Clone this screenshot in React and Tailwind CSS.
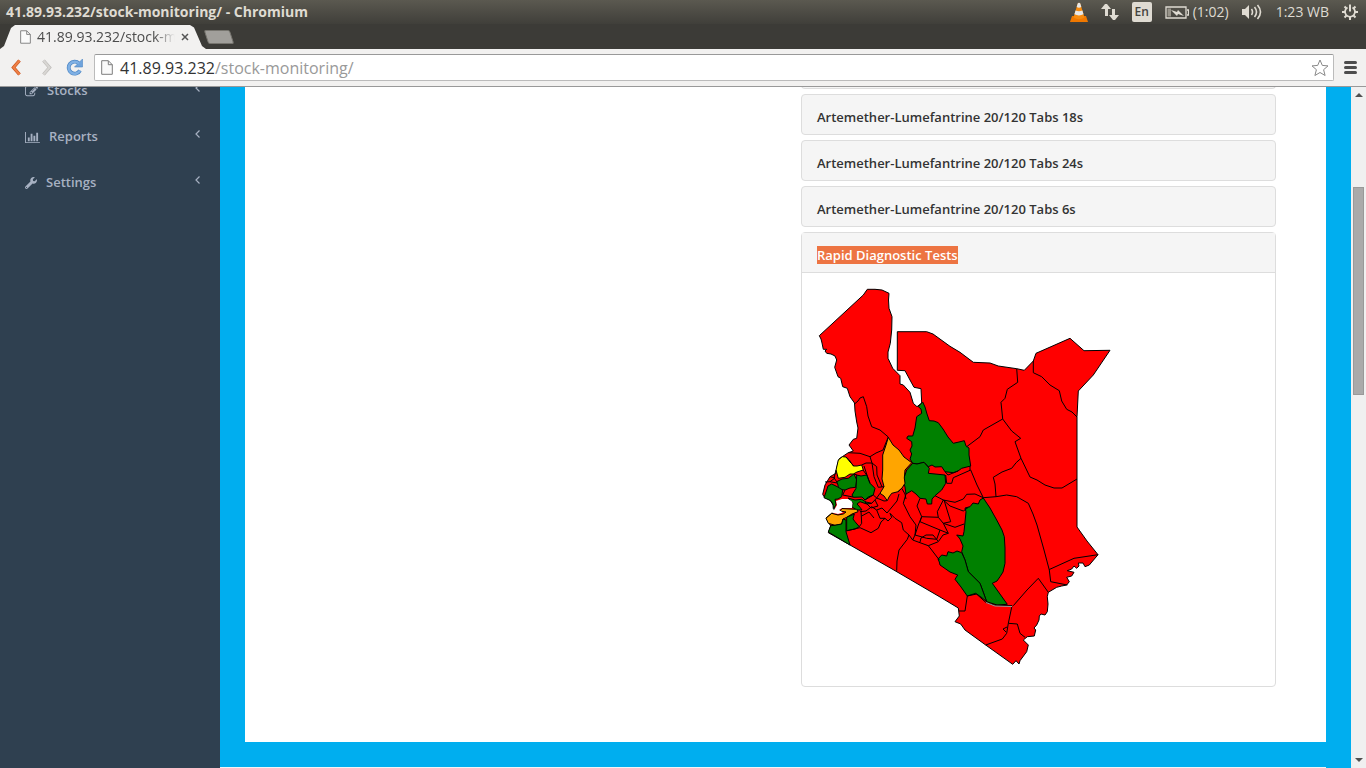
import React from 'react';
import { FaWrench } from 'react-icons/fa';

const StocksIcon = () => (
  <svg viewBox="0 0 1792 1792" className="w-[13px] h-[13px] fill-current" aria-hidden="true">
    <path d="M888 1184l116-116-152-152-116 116v56h96v96h56zm440-720q-16-16-33 1l-350 350q-17 17-1 33t33-1l350-350q17-17 1-33zm80 594v190q0 119-84.5 203.5t-203.5 84.5h-832q-119 0-203.5-84.5t-84.5-203.5v-832q0-119 84.5-203.5t203.5-84.5h832q63 0 117 25 15 7 18 23 3 17-9 29l-49 49q-14 14-32 8-23-6-45-6h-832q-66 0-113 47t-47 113v832q0 66 47 113t113 47h832q66 0 113-47t47-113v-126q0-13 9-22l64-64q15-15 35-7t20 29zm-96-738l288 288-672 672h-288v-288zm444 132l-92 92-288-288 92-92q28-28 68-28t68 28l152 152q28 28 28 68t-28 68z" />
  </svg>
);

const ReportsIcon = () => (
  <svg viewBox="0 0 2048 1792" className="w-[15px] h-[13px] fill-current" aria-hidden="true">
    <path d="M640 896v512h-256v-512h256zm384-512v1024h-256v-1024h256zm1024 1152v128h-2048v-1536h128v1408h1920zm-640-896v768h-256v-768h256zm384-384v1152h-256v-1152h256z" />
  </svg>
);

const PageIcon = ({ className }) => (
  <svg viewBox="0 0 12 15" className={className} aria-hidden="true">
    <path d="M.7.7h6.6l4 4v9.6H.7z" fill="#fafafa" stroke="#7d7d7d" />
    <path d="M7.3.7v4h4" fill="none" stroke="#7d7d7d" />
  </svg>
);

const menuItems = [
  { label: 'Stocks', icon: <StocksIcon /> },
  { label: 'Reports', icon: <ReportsIcon /> },
  { label: 'Settings', icon: <FaWrench className="w-3 h-3" /> },
];

const drugs = [
  'Artemether-Lumefantrine 20/120 Tabs 18s',
  'Artemether-Lumefantrine 20/120 Tabs 24s',
  'Artemether-Lumefantrine 20/120 Tabs 6s',
];

// Counties with a stock status other than red
const counties = [
  { name: 'Samburu', fill: 'green', points: '922.7,402 925,407 927,414 929.3,420.7 934,421 938.3,422.7 943,429 948,437 953.3,443.3 959,442 964.3,440.7 966,446 969,448 969,455 970.7,466 961.7,468.3 958,471 953.3,472.7 945,471.7 941.7,466.7 935,467 932,465 928.3,466.7 924,462.3 917,464 912.7,463.3 910,459 911.7,454 910,450 912,446 911.7,441.7 906.7,438.3 908,436 912.7,436 915,428 916.7,416.7 921.7,413.3 921,409 918.3,406.7' },
  { name: 'Laikipia', fill: 'green', points: '912.7,463.3 917,464 924,462.3 929.3,468.3 928.3,473.3 945,475 945.7,483.3 941.7,490 935,495.7 932,499 931.7,504 927.3,504 926,499 920,498.3 916,494 911.7,490.7 906,494 905,487 903.3,480 906.7,470' },
  { name: 'Baringo', fill: 'orange', points: '888.3,437.3 893,445 899,450 904,457 911.7,462.7 905,470 904.3,478 905,483.3 902,488 898,491.7 891.7,493.3 889,497 887.3,500.7 884,496 880,493.3 884,486.7 882,479 882.7,470 882.7,455 886,445' },
  { name: 'Bungoma', fill: 'yellow', points: '842.3,456.7 846,457 849.3,460 853.3,466 857,466 861.7,465 863.3,470 857,472 853.3,474 850,474 845,477.3 838.3,478.3 836,470 838.3,460' },
  { name: 'Kakamega', fill: 'green', points: '836.7,481.7 842,479 848.3,478.3 854,474 856.7,480 855.7,487.3 850,488 845,490 838.3,489.3 838,485' },
  { name: 'Nandi', fill: 'green', points: '856.7,475 861,476 866.7,475 870,483.3 875,488.3 873.3,495 865,500 862,497 853.3,497.3 852,495 856,488.3' },
  { name: 'Siaya', fill: 'green', points: '826.7,490 828,486 831.7,484 837.3,486.7 842.7,490 841.7,496.7 838,499 835,499.3 836,505 833.3,508.7 833,504 830.7,500.7 824,497.7' },
  { name: 'Kisumu', fill: 'green', points: '848,498 855,500 861.7,499.3 866,502 871.7,503.3 866.7,504 860,501.7 857,504 860,507.3 862,510 856.7,510 852,507 853,503' },
  { name: 'Homa Bay', fill: 'orange', points: '826,518.3 831.7,513.3 838,515 843.3,514 846,512 840,511 842,508.5 850,509 856.7,509.3 858,511.7 852,514 846.7,517.3 843,519 841.7,524 835,525.3 828.3,523.3' },
  { name: 'Migori', fill: 'green', points: '835,525.3 841.7,524 843,519 846,520 846,531.7 850,545 828.3,532 830.7,525.7' },
  { name: 'Kisii', fill: 'green', points: '846.7,517.3 854.3,514 853,519 855,521.7 859.3,526.7 855,529 846.7,530.7' },
  { name: 'Kitui', fill: 'green', points: '983.3,498 990,508 996.7,520 1002,530 1004.3,536.7 1005,548 1005,563.3 1003,572 1000,576.7 997,581 992.3,583.3 1007.3,604.3 997,605 986.7,601.7 980,583.3 968.3,571.7 965,560 961.7,551.7 963,546 960,539 956.7,535 963,536 964,531.7 965,522 966,511.7 965,508 970,506.7 973,503 978.3,504 980,500' },
  { name: 'Makueni', fill: 'green', points: '939.3,562 938,559 941.7,555 946.7,556 948,551.7 953,553 957,551 961.7,552.7 965,560 968.3,571.7 980,583.3 986.7,601.7 981,597 976.7,594 967.3,596 961,587 955,579.3 957.7,575 950,572 940,565' },
];

const mainland =
  'M855 411L854.5 403 850 396.7 847.3 388.3 842.7 386.7 840.7 378.3 838 376.7 834.7 367.3 836.7 360 835 356 831 354 826.7 353.3 825 351 826.7 349.3 823.3 349.3 822 343 821 339 819.3 335.7 863.3 295 867.3 289.3 875 289.3 882 290 889 293.3 888.5 300 889 308.3 892 316.7 891.7 330 890.3 343.3 888 352 888 358.3 892.7 368.3 900 375.7 900 384 903.3 385 910 392.3 913.3 403.3 917 406.7 921.7 403 921 388.7 914 387.3 910 380 905 370.7 897.3 370.3V331.7H926.7L933 334 950 346.3 960 352.3 973.3 362.3 990 363 998.3 366 1016.7 368.7 1024.3 370.3 1033.3 361 1036 353.3 1070 338.3 1084 350.7 1110 350.3 1093.3 375 1078.3 391 1077 416.7V527L1087 541 1098 554.7 1089.3 565 1085 566.7 1083 563 1078.3 563 1079 566 1076.7 568.3 1074 566 1071.7 569 1067.3 570.7 1074 572.3 1071.7 576 1066.7 577.3 1069.3 581.7 1066.7 585 1061.7 586 1056.7 587.3 1048.3 592.3 1047.3 596.7 1048 604 1047.3 611.7 1045 615 1041 614 1039.3 616 1039 620 1036.7 625 1034 628 1035.7 630 1034.3 636 1027.3 636.7 1023.3 640 1028.3 645 1026.7 651.7 1020 660.7 1019 664 1016 660.7 1012.7 664.3 985.7 645 965 630 960.7 624 955 621.7 959.3 616 958.3 608 940 597 893 569.5 850 545 828.3 532.7 830.7 526 826 518 831.7 513.3 835 508 830 500 824 496.7 822.7 494.3 825 485 830 476.7 836 473.3 836.7 468.3 839 459 842.3 456.7 848.3 452.7 853.3 451 849 445 853.3 439.3 856.7 438.3 858 428 856.7 422z';

const borders = [
  'M1016.7 368.7L1017.7 382.3 1007.3 389.3 1005 398.3 1001 402.3 1002.7 419 1011.7 431 1020.7 438.3 1015 441.7 1021 458.3 1030 477 1037 480 1045 485 1054 488 1062 488 1077 479',
  'M1033.3 361V372.7L1041.7 376.7 1050 385 1059.3 390.7 1061.7 401 1066.7 409.3 1072 412 1077 417',
  'M1002.7 419L983.3 430 980 436.7 966.7 446.7',
  'M1021 458.3Q1016 462 1011.7 468.3L1002 472 993.3 477.3 995 484 996 496.7',
  'M983.3 497.7L996 496.7 1006.7 495 1016.7 496.7 1028.3 503.3 1033 514 1037 525 1044 550 1049.3 570 1050.7 581.7 1067.3 585',
  'M1049.3 569.5L1074 558.3 1098 554.7',
  'M945.7 475L946.7 483.3 951.7 483.3 953.3 477.7 970.7 470 977 485 983.3 497.7',
  'M945 471.7L948 475 958 471M970 466V470',
  'M935 495.7L943.3 500 955 502.3 963.3 499 966.7 494.3 975 494 983.3 497.7',
  'M943.3 500L950 506 963.3 511 968.3 507.3',
  'M943.3 500L937.3 511.7 938.3 517.3 943.3 523.3 950.7 521.7 944 500',
  'M943.3 523.3L955 527.3 964 524M938.3 517.3L921.7 516.7 920 521.7 940 530 948.3 533.3 943.3 523.3',
  'M920 498.3L917 506 921.7 516.7 918.3 525 915 535 912.7 540 920 542.7 928.3 545.7 938.3 541.7 943 535 948.3 533.3',
  'M906 494L903.3 503.3 910 516.7 916 525 915 535 926.7 538.3 936.7 539.3 940 530',
  'M920 542L921 538 926 535 933 535 938 541M928.3 545.7L931.7 550 939.3 560',
  'M912.7 540L909 535 907.3 539.3 899 550 897 561 896.7 570.7',
  'M846 531L860 527.7 871 532.7 878.3 528.3 881 522 885 518.3 888 521 891.7 517.3 890 513.3 895 518.3 901.7 522.7 903.3 530 909 535',
  'M854.5 404L858 401 860 398 863.3 396.7 866.7 406.7 868 416 871.7 426.7 880 430 888.3 437 885 445 883 450 876 453 870 456.7 860 453.3 848.3 452.7',
  'M846 457L850 462 854 466M861.7 465L866 463 872 463 870 456.7M872 463L876.7 466.7 877 475 882 487',
  'M864 466L867 475 870 483.3M872 463L874 476.7 878.3 487.3 884 486.7M863 470L866.7 475',
  'M830 476.7L835 478 830 481.7 825 482M830 481.7L837 483M836 470L834 478 837 482',
  'M845 490L842.7 495 853 497M854 474L857 475',
  'M865 500L868.3 497 873.3 495 876.7 498 880 493.3M871.7 503.3L876.7 498 884 501 887 500.7',
  'M860 511.7L866 511 871.7 506.7 876.7 510 880 518.3 885 518.3M861 511L861.7 523.3 859.3 526.7',
  'M865 502L871 508 878 506 875 500M876.7 510L882 508 887 513 892 507 897 501 899 494',
  'M898 491.7L901.7 488.3 905 494 906 499M861.7 516L869 512 874 518',
  'M967.3 596L965 611 959 611M967.3 596L975.7 593.3 985.7 602.3 995 605.3 1012 605.7',
  'M1012 605.7L1008.3 623.3 1006.7 633.3 1002.3 639 985.7 645M1008.3 623.3L1017.3 624 1020 633.3 1025 637.3',
  'M1013.3 605.7L1027 590 1038.3 578.3 1048.3 592.3M1007 627L1003 629 1006 632',
];

const CountyMap = () => (
  <svg viewBox="817 288 300 383" className="w-[300px] h-[383px]" role="img" aria-label="Rapid Diagnostic Tests">
    <g stroke="#000" strokeWidth="1" strokeLinejoin="round">
      <path d={mainland} fill="red" />
      {counties.map((county) => (
        <polygon key={county.name} points={county.points} fill={county.fill} />
      ))}
      {borders.map((d) => (
        <path key={d} d={d} fill="none" />
      ))}
    </g>
    {/* Lake Victoria gulf */}
    <path d="M829 512L834.5 509.5 837 505 836 501 842 499 848 499 851.5 501 852.5 503 852 508 842 508 839 510 843 512.5 838 514 831.5 512.5z" fill="#fff" />
    <path d="M986 602.5L995 606 1012 606.5" fill="none" stroke="#999" strokeWidth="1" />
  </svg>
);

const TopPanel = () => (
  <div className="flex h-6 shrink-0 items-center justify-between bg-linear-to-b from-[#5b5950] to-[#403f3a] pl-1.5 pr-2 text-sm text-[#dfdbd2]">
    <span className="font-bold">41.89.93.232/stock-monitoring/ - Chromium</span>
    <div className="flex items-center gap-[13px]">
      <svg viewBox="0 0 18 20" className="h-5 w-[18px]" aria-hidden="true">
        <path d="M2 14h14l2 6H0z" fill="#f07800" />
        <path d="M7.7 1.5Q9 .2 10.3 1.5L14.5 15.5Q9 19 3.5 15.5z" fill="#f68b10" />
        <path d="M7.7 1.5Q9 .2 10.3 1.5l1 3.5Q9 6.3 6.7 5zM5.5 8.5Q9 10 12.4 8.5l1.1 3.8Q9 14.5 4.4 12.3z" fill="#e8e8e8" />
      </svg>
      <svg viewBox="0 0 18 17" className="h-[17px] w-[18px] fill-current" aria-hidden="true">
        <path d="M4 0h2l4 5H7v7H4V5H0zM11 5h3v6h4l-4 5h-2l-4-5h3z" />
      </svg>
      <span className="flex h-5 w-5 items-center justify-center rounded-xs bg-[#dfdbd2] text-xs font-semibold text-[#45433e]">En</span>
      <span className="flex items-center gap-1">
        <svg viewBox="0 0 24 13" className="h-[13px] w-6" aria-hidden="true">
          <path d="M1 1h20v11H1zM22 4h1.5v5H22" fill="none" stroke="#dfdbd2" strokeWidth="1.3" />
          <path d="M2.5 2.5H6v8H2.5z" fill="#99958b" />
          <path d="M6 4l6 2 1-2 6 6-6-2-1 2z" fill="#dfdbd2" />
        </svg>
        (1:02)
      </span>
      <svg viewBox="0 0 21 16" className="h-4 w-[21px]" aria-hidden="true">
        <path d="M0 5h3l4-4v14l-4-4H0z" fill="#dfdbd2" />
        <path d="M9.5 5q2 3 0 6M12.5 3q4 5 0 10M15.5 1q6 7 0 14" fill="none" stroke="#dfdbd2" strokeWidth="1.6" />
      </svg>
      <span>1:23 WB</span>
      <svg viewBox="0 0 16 16" className="h-4 w-4" fill="none" stroke="#dfdbd2" aria-hidden="true">
        <path d="M5.5 3.5a5 5 0 1 0 5 0" strokeWidth="1.8" />
        <path d="M8 .5v7M2.5 2.5l2 2M13.5 2.5l-2 2M0 8h3M13 8h3M2.5 13.5l2-2M13.5 13.5l-2-2M8 13v3" strokeWidth="2" />
      </svg>
    </div>
  </div>
);

const Browser = () => (
  <>
    <div className="flex h-[25px] shrink-0 items-end bg-[#3c3b37]">
      <div className="flex h-6 w-[206px] items-center bg-[#f2f1f0] pl-5 pr-4 [clip-path:polygon(0_100%,4px_88%,11px_12%,15px_0,190px_0,194px_10%,202px_88%,206px_100%)]">
        <PageIcon className="h-3.5 w-[11px] shrink-0" />
        <span className="ml-1.5 w-[138px] overflow-hidden whitespace-nowrap text-sm text-[#4c4c4c] [mask-image:linear-gradient(to_right,#000_85%,transparent)]">
          41.89.93.232/stock-monitoring/
        </span>
        <button type="button" aria-label="Close tab" className="ml-1.5 shrink-0">
          <svg viewBox="0 0 8 8" className="h-2 w-2" aria-hidden="true">
            <path d="M1 1l6 6M7 1L1 7" stroke="#555" strokeWidth="1.5" />
          </svg>
        </button>
      </div>
      <button type="button" aria-label="New tab" className="mb-[5px] h-3.5 w-[26px] skew-x-[18deg] rounded-xs border border-[#77756f] bg-[#a19f9b]" />
    </div>

    <div className="flex h-[38px] shrink-0 items-center border-b border-[#999] bg-[#f2f1f0] pl-[11px] pr-[9px]">
      <button type="button" aria-label="Back">
        <svg viewBox="0 0 10 17" className="h-[17px] w-2.5" fill="none" aria-hidden="true">
          <path d="M8.5 1.5L2.5 8.5l6 7" stroke="#c9551f" strokeWidth="3.4" />
          <path d="M8.5 1.5L2.5 8.5l6 7" stroke="#ee7f45" strokeWidth="2" />
        </svg>
      </button>
      <button type="button" aria-label="Forward" className="ml-[21px]">
        <svg viewBox="0 0 10 17" className="h-[17px] w-2.5" fill="none" aria-hidden="true">
          <path d="M1.5 1.5l6 7-6 7" stroke="#bdbbb8" strokeWidth="3.4" />
          <path d="M1.5 1.5l6 7-6 7" stroke="#d8d6d3" strokeWidth="2" />
        </svg>
      </button>
      <button type="button" aria-label="Reload" className="ml-3.5">
        <svg viewBox="0 0 17 17" className="h-[17px] w-[17px]" aria-hidden="true">
          <path d="M13 4.5A6 6 0 1 0 14 11.5" fill="none" stroke="#4d86c4" strokeWidth="3.8" />
          <path d="M16.5 0v8H8.5z" fill="#6ea3dc" stroke="#4d86c4" strokeWidth=".6" />
          <path d="M13 4.5A6 6 0 1 0 14 11.5" fill="none" stroke="#7fb0e4" strokeWidth="2.4" />
        </svg>
      </button>
      <div className="ml-[11px] flex h-[27px] min-w-0 flex-1 items-center rounded-xs border border-[#bbb] border-t-[#999] bg-white pl-1.5 pr-1">
        <PageIcon className="h-[15px] w-3 shrink-0" />
        <label htmlFor="address" className="ml-[7px] text-base text-[#333]">41.89.93.232</label>
        <input id="address" type="text" defaultValue="/stock-monitoring/" className="min-w-0 flex-1 bg-transparent text-base text-[#999] outline-none" />
        <button type="button" aria-label="Bookmark">
          <svg viewBox="0 0 18 18" className="h-[18px] w-[18px]" aria-hidden="true">
            <path d="M9 1l2.3 5.4 5.7.5-4.4 3.8 1.5 5.8L9 13.5l-5.100 3 1.5-5.800L1 6.900l5.700-.5z" fill="#fff" stroke="#888" strokeLinejoin="round" />
          </svg>
        </button>
      </div>
      <button type="button" aria-label="Menu" className="ml-2.5 flex w-[13px] flex-col gap-0.5">
        <span className="h-[3px] rounded-full bg-[#4d4d4d]" />
        <span className="h-[3px] rounded-full bg-[#4d4d4d]" />
        <span className="h-[3px] rounded-full bg-[#4d4d4d]" />
      </button>
    </div>
  </>
);

const Sidebar = () => (
  <nav className="w-[220px] shrink-0 bg-[#2f4050]">
    <ul>
      {menuItems.map((item) => (
        <li key={item.label}>
          <a href="#" className="flex h-[46px] items-center pt-0.5 pl-[25px] pr-5 text-[13px] font-semibold text-[#a7b1c2]">
            {item.icon}
            <span className="ml-[9px]">{item.label}</span>
            <svg viewBox="0 0 5 8" className="mb-1.5 ml-auto h-2 w-[5px]" fill="none" stroke="currentColor" aria-hidden="true">
              <path d="M4.5.5L1 4l3.5 3.5" strokeWidth="1.2" />
            </svg>
          </a>
        </li>
      ))}
    </ul>
  </nav>
);

const Scrollbar = () => (
  <div className="flex w-[15px] shrink-0 flex-col items-center bg-[#f0f0f0] py-1.5">
    <div className="h-0 w-0 border-x-4 border-b-4 border-x-transparent border-b-[#505050]" />
    <div className="mt-[90px] h-52 w-[11px] border border-[#999] bg-[#aaa]" />
    <div className="mt-auto h-0 w-0 border-x-4 border-t-4 border-x-transparent border-t-[#505050]" />
  </div>
);

const App = () => {
  return (
    <div className="flex h-screen flex-col overflow-hidden bg-white font-['Open_Sans',sans-serif]">
      <TopPanel />
      <Browser />

      <div className="flex min-h-0 flex-1">
        <div className="min-w-0 flex-1 overflow-hidden">
          <div className="-mt-5 flex min-h-[calc(100%+20px)]">
            <Sidebar />
            <main className="flex flex-1 flex-col bg-[#00aeef] pr-[25px]">
              <div className="mb-[25px] ml-[25px] flex flex-1 justify-end bg-white pr-[50px] pb-[55px]">
                <div className="w-[475px] space-y-[5px] text-[13px] leading-[18px] font-semibold text-[#333]">
                  <div className="h-[22px] rounded-b-sm border border-t-0 border-[#ddd] bg-[#f5f5f5]" />
                  {drugs.map((drug) => (
                    <div key={drug} className="rounded-sm border border-[#ddd] bg-[#f5f5f5] px-[15px] pt-[13px] pb-2">
                      <a href="#" className="block">{drug}</a>
                    </div>
                  ))}
                  <div className="rounded-sm border border-[#ddd] bg-white">
                    <div className="border-b border-[#ddd] bg-[#f5f5f5] px-[15px] pt-[13px] pb-2">
                      <a href="#" className="block w-fit bg-[#ed7442] text-white">Rapid Diagnostic Tests</a>
                    </div>
                    <div className="flex p-[15px]">
                      <CountyMap />
                    </div>
                  </div>
                </div>
              </div>
              <div className="h-px bg-[#f3f3f4]" />
            </main>
          </div>
        </div>
        <Scrollbar />
      </div>
    </div>
  );
};

export default App;
